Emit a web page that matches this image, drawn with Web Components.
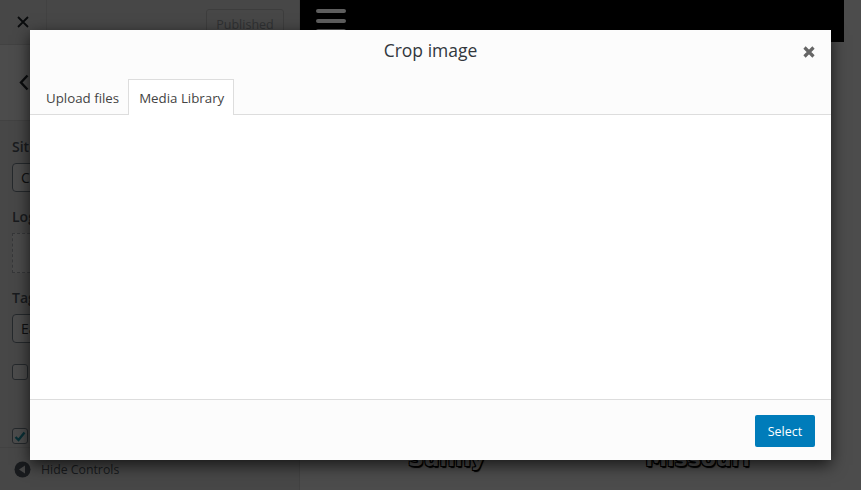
<!DOCTYPE html>
<html>
<head>
<meta charset="utf-8">
<style>
html, body{
	margin: 0;
	height: 100%;
	overflow: hidden;
	font-family: "Open Sans", "Liberation Sans", sans-serif;
}
body{
	display: flex;
	height: 490px;
	background: #fff;
}
</style>
</head>
<body>
<customize-controls>
	<control-field label="Site Title" value="Crafty" type="input"></control-field>
	<control-field label="Logo" type="logo"></control-field>
	<control-field label="Tagline" value="Easy" type="input"></control-field>
	<control-field label="Display" type="check"></control-field>
	<control-field label="Header" type="check" checked></control-field>
</customize-controls>
<customize-preview></customize-preview>
<modal-backdrop></modal-backdrop>
<crop-modal heading="Crop image">
	<modal-tab slot="tabs">Upload files</modal-tab>
	<modal-tab slot="tabs" active>Media Library</modal-tab>
	<modal-button slot="footer">Select</modal-button>
</crop-modal>

<script>
class CustomizeControls extends HTMLElement{
	constructor(){
		super();
		this.attachShadow({mode: 'open'});
		this.shadowRoot.innerHTML = `
<style>
:host{
	display: flex;
	flex-direction: column;
	flex: 0 0 299px;
	height: 490px;
	background: #eeeeee;
	border-right: 1px solid #ddd;
	color: #555d66;
	font-size: 13px;
}
.top{
	display: flex;
	align-items: center;
	height: 45px;
	flex: none;
	background: #eee;
	border-bottom: 1px solid #ddd;
	box-sizing: border-box;
}
.close{
	display: flex;
	align-items: center;
	justify-content: center;
	width: 47px;
	height: 100%;
	border-right: 1px solid #ddd;
	box-sizing: border-box;
}
.publish{
	margin-left: auto;
	margin-right: 15px;
	margin-top: 4px;
	width: 78px;
	height: 30px;
	box-sizing: border-box;
	border: 1px solid #ccc;
	border-radius: 3px;
	color: #a0a5aa;
	display: flex;
	align-items: center;
	justify-content: center;
	font-size: 12.5px;
}
.back{
	display: flex;
	align-items: center;
	height: 76px;
	flex: none;
	padding-left: 19px;
	background: #fff;
	border-bottom: 1px solid #ddd;
	box-sizing: border-box;
}
.fields{
	flex: 1;
	min-height: 0;
	padding: 16px 12px 0;
	display: flex;
	flex-direction: column;
}
.bottom{
	display: flex;
	align-items: center;
	gap: 10px;
	height: 43px;
	flex: none;
	padding-left: 14px;
	border-top: 1px solid #ddd;
	box-sizing: border-box;
	color: #555d66;
	font-size: 12.3px;
}
</style>
<div class="top">
	<div class="close">
		<svg width="14" height="14" viewBox="0 0 14 14"><path d="M2 2l10 10M12 2L2 12" stroke="#23282d" stroke-width="1.8" fill="none"/></svg>
	</div>
	<div class="publish">Published</div>
</div>
<div class="back">
	<svg width="10" height="17" viewBox="0 0 10 17"><path d="M8.5 1.5L2 8.5l6.5 7" stroke="#23282d" stroke-width="2.4" fill="none"/></svg>
</div>
<div class="fields"><slot></slot></div>
<div class="bottom">
	<svg width="17" height="17" viewBox="0 0 17 17"><circle cx="8.5" cy="8.5" r="8" fill="#555d66"/><path d="M11 4.5v8L5 8.5z" fill="#eee"/></svg>
	<span>Hide Controls</span>
</div>`;
	}
}

class ControlField extends HTMLElement{
	constructor(){
		super();
		this.attachShadow({mode: 'open'});
		const label = this.getAttribute('label') || '';
		const value = this.getAttribute('value') || '';
		const type = this.getAttribute('type');
		let body = '';
		if(type === 'input'){
			body = `<div class="label">${label}</div><div class="input">${value}</div>`;
		}
		else if(type === 'logo'){
			body = `<div class="label">${label}</div><div class="logo"></div>`;
		}
		else{
			const tick = this.hasAttribute('checked')
				? '<svg width="12" height="11" viewBox="0 0 12 11"><path d="M1.5 6l3 3 6-7.5" stroke="#1e9bb0" stroke-width="2.4" fill="none"/></svg>'
				: '';
			body = `<div class="check"><span class="box">${tick}</span><span>${label}</span></div>`;
		}
		this.shadowRoot.innerHTML = `
<style>
:host{
	display: block;
}
:host([type="input"]){
	margin-bottom: 15px;
}
:host([type="logo"]){
	margin-bottom: 15px;
}
:host([type="check"]){
	margin-bottom: 48px;
}
:host([checked]){
	margin-bottom: 0;
}
:host([label="Tagline"]){
	margin-bottom: 21px;
}
.label{
	font-size: 14px;
	line-height: 20px;
	font-weight: 600;
	color: #555d66;
	margin-bottom: 6px;
}
.input{
	height: 29px;
	box-sizing: border-box;
	border: 1px solid #7e8993;
	border-radius: 4px;
	padding-left: 8px;
	line-height: 27px;
	font-size: 14px;
	background: #fff;
	color: #32373c;
}
.logo{
	height: 40px;
	box-sizing: border-box;
	border: 1px dashed #b4b9be;
	background: #fafafa;
}
.check{
	display: flex;
	align-items: center;
	gap: 8px;
	font-size: 14px;
	height: 16px;
}
.box{
	display: flex;
	align-items: center;
	justify-content: center;
	width: 16px;
	height: 16px;
	box-sizing: border-box;
	border: 1px solid #7e8993;
	border-radius: 3px;
	background: #fff;
}
</style>
${body}`;
	}
}

class CustomizePreview extends HTMLElement{
	constructor(){
		super();
		this.attachShadow({mode: 'open'});
		this.shadowRoot.innerHTML = `
<style>
:host{
	display: flex;
	flex-direction: column;
	flex: 1;
	min-width: 0;
	height: 490px;
	background: #fff;
}
.wrap{
	flex: 1;
	display: flex;
}
.page{
	flex: 1;
	display: flex;
	flex-direction: column;
}
.bar{
	height: 42px;
	flex: none;
	background: #000;
	padding: 9px 0 0 16px;
	box-sizing: border-box;
	display: flex;
	flex-direction: column;
	gap: 6px;
}
/* the bars read lighter than the backdrop would leave them, so they sit above it */
.bar i{
	display: block;
	position: relative;
	z-index: 1;
	width: 30px;
	height: 4px;
	border-radius: 2px;
	background: #5e5e5e;
}
.content{
	flex: 1;
	display: flex;
	align-items: flex-end;
	padding: 0 0 16px 108px;
	gap: 160px;
	font: bold 22px "DejaVu Sans", sans-serif;
	color: #fff;
	text-shadow: 1px 1px 0 #000, -1px 1px 0 #000, 1px -1px 0 #000, -1px -1px 0 #000, 1px 2px 1px #000;
	line-height: 30px;
}
.scroll{
	width: 17px;
	flex: none;
	background: #fff;
}
</style>
<div class="wrap">
	<div class="page">
		<div class="bar"><i></i><i></i><i></i></div>
		<div class="content"><span>Sunny</span><span>Missouri</span></div>
	</div>
	<div class="scroll"></div>
</div>`;
	}
}

class ModalBackdrop extends HTMLElement{
	constructor(){
		super();
		this.attachShadow({mode: 'open'});
		this.shadowRoot.innerHTML = `
<style>
:host{
	position: fixed;
	inset: 0;
	background: rgba(0,0,0,.7);
}
</style>`;
	}
}

class CropModal extends HTMLElement{
	constructor(){
		super();
		this.attachShadow({mode: 'open'});
		this.shadowRoot.innerHTML = `
<style>
:host{
	position: fixed;
	z-index: 2;
	left: 30px;
	top: 30px;
	width: 801px;
	height: 430px;
	display: flex;
	flex-direction: column;
	background: #fff;
	box-shadow: 0 5px 15px rgba(0,0,0,.7);
	color: #32373c;
}
header{
	flex: none;
	height: 85px;
	box-sizing: border-box;
	background: #fcfcfc;
	border-bottom: 1px solid #ddd;
	display: flex;
	flex-direction: column;
	position: relative;
}
h1{
	margin: 0;
	height: 49px;
	font-size: 17.5px;
	line-height: 41px;
	font-weight: 500;
	text-align: center;
	color: #32373c;
}
.x{
	position: absolute;
	right: 15px;
	top: 15px;
}
.tabs{
	display: flex;
	padding-left: 8px;
	height: 36px;
	align-items: flex-end;
}
main{
	flex: 1;
	background: #fff;
}
footer{
	flex: none;
	height: 61px;
	box-sizing: border-box;
	background: #fcfcfc;
	border-top: 1px solid #ddd;
	display: flex;
	justify-content: flex-end;
	align-items: flex-start;
	padding: 15px 16px 0 0;
}
</style>
<header>
	<h1>${this.getAttribute('heading')}</h1>
	<svg class="x" width="14" height="14" viewBox="0 0 14 14"><path d="M2.5 2.5l9 9M11.5 2.5l-9 9" stroke="#666" stroke-width="3.2" fill="none"/></svg>
	<div class="tabs"><slot name="tabs"></slot></div>
</header>
<main></main>
<footer><slot name="footer"></slot></footer>`;
	}
}

class ModalTab extends HTMLElement{
	constructor(){
		super();
		this.attachShadow({mode: 'open'});
		this.shadowRoot.innerHTML = `
<style>
:host{
	display: flex;
	align-items: center;
	height: 36px;
	box-sizing: border-box;
	padding: 0 8px 0 7px;
	font-size: 13.3px;
	color: #444;
	border: 1px solid transparent;
	border-bottom: 0;
	margin-bottom: -1px;
}
:host([active]){
	background: #fff;
	border-color: #ddd;
	padding: 0 9px 0 10px;
	height: 36px;
}
</style>
<slot></slot>`;
	}
}

class ModalButton extends HTMLElement{
	constructor(){
		super();
		this.attachShadow({mode: 'open'});
		this.shadowRoot.innerHTML = `
<style>
:host{
	display: flex;
	align-items: center;
	justify-content: center;
	width: 60px;
	height: 32px;
	border-radius: 2px;
	background: #007cba;
	color: #fff;
	font-size: 12.5px;
	font-weight: 500;
}
</style>
<slot></slot>`;
	}
}

customElements.define('customize-controls', CustomizeControls);
customElements.define('control-field', ControlField);
customElements.define('customize-preview', CustomizePreview);
customElements.define('modal-backdrop', ModalBackdrop);
customElements.define('crop-modal', CropModal);
customElements.define('modal-tab', ModalTab);
customElements.define('modal-button', ModalButton);
</script>
</body>
</html>
